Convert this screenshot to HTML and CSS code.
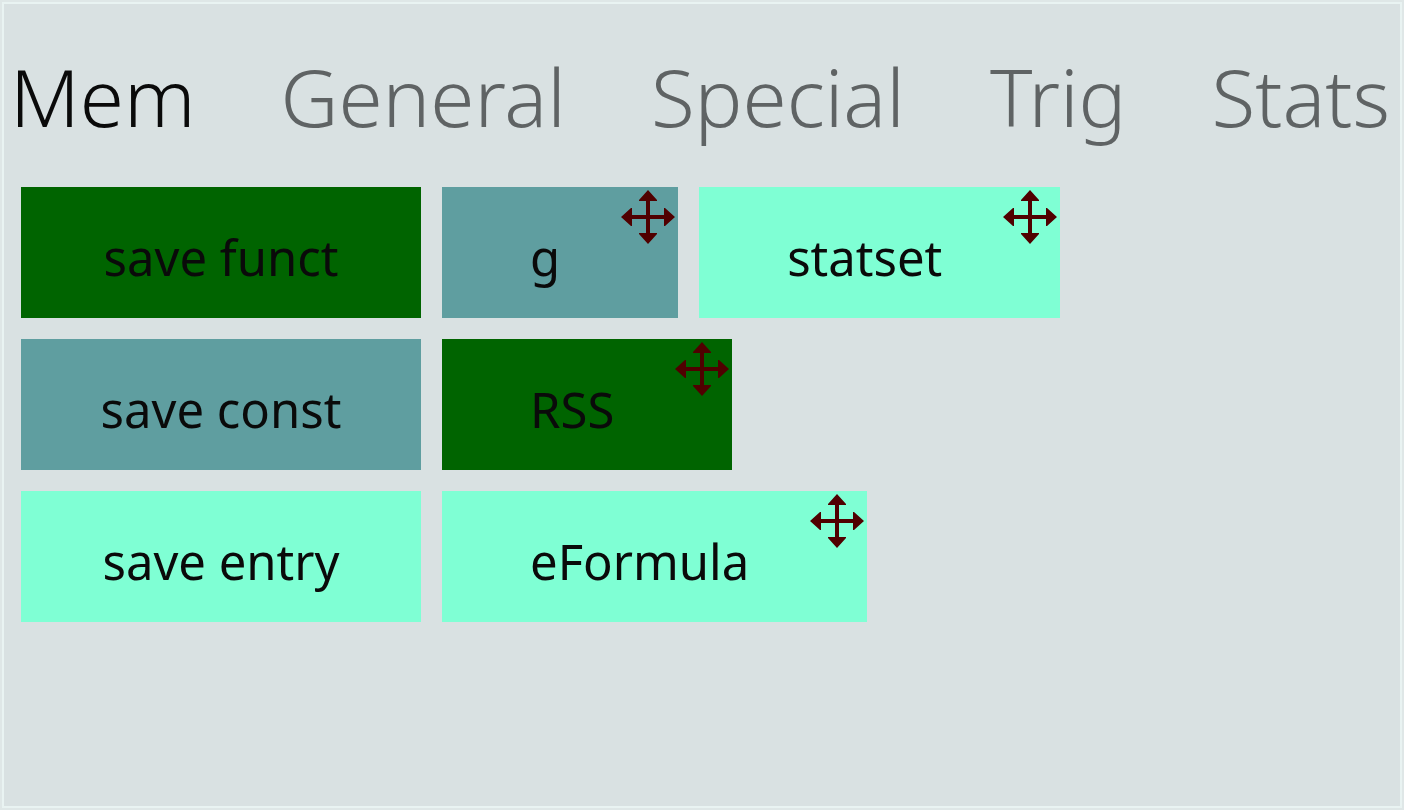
FILE: index.html
```html
<!DOCTYPE html>
<html lang="en">
<head>
  <meta charset="UTF-8">
  <meta name="viewport" content="width=device-width, initial-scale=1.0">
  <title>Calculator memory</title>
  <link rel="stylesheet" href="styles.css">
</head>
<body>
  <svg class="defs" aria-hidden="true">
    <symbol id="move" viewBox="0 0 54 54">
      <path d="M27 6v42M6 27h42" stroke="#500000" stroke-width="4"/>
      <path d="M27 0l9 10v1H18v-1zM27 54l9-10v-1H18v1zM0 27l10-9h1v18h-1zM54 27l-10-9h-1v18h1z" fill="#500000"/>
    </symbol>
  </svg>

  <nav class="tabs">
    <a class="tab active" href="#mem">Mem</a>
    <a class="tab" href="#general">General</a>
    <a class="tab" href="#special">Special</a>
    <a class="tab" href="#trig">Trig</a>
    <a class="tab" href="#stats">Stats</a>
  </nav>

  <main class="memory" id="mem">
    <div class="row">
      <button class="key save funct">save funct</button>
      <button class="key const">g<svg class="move"><use href="#move"/></svg></button>
      <button class="key entry">statset<svg class="move"><use href="#move"/></svg></button>
    </div>
    <div class="row">
      <button class="key save const">save const</button>
      <button class="key funct">RSS<svg class="move"><use href="#move"/></svg></button>
    </div>
    <div class="row">
      <button class="key save entry">save entry</button>
      <button class="key entry">eFormula<svg class="move"><use href="#move"/></svg></button>
    </div>
  </main>
</body>
</html>
```
FILE: styles.css
```css
* {
  box-sizing: border-box;
}

body {
  margin: 0;
  min-height: 100vh;
  background: #d9e1e2;
  border: 2px solid #dfe7e7;
  box-shadow: inset 0 0 0 2px #e9f3f2;
  font-family: "Noto Sans", "Open Sans", sans-serif;
  color: #0a0a0a;
}

.defs {
  display: none;
}

.tabs {
  display: flex;
  justify-content: space-between;
  padding: 40px 12px 0 8px;
}

.tab {
  font-size: 80px;
  line-height: 108px;
  font-weight: 300;
  color: #5f6364;
  text-decoration: none;
}

.tab.active {
  color: #0a0a0a;
}

.memory {
  display: flex;
  flex-direction: column;
  gap: 21px;
  padding: 37px 19px;
}

.row {
  display: flex;
  gap: 21px;
}

.key {
  position: relative;
  height: 131px;
  padding: 8px 118px 0 88px;
  border: none;
  font-family: inherit;
  font-size: 49px;
  color: #0a0a0a;
  cursor: pointer;
}

.save {
  width: 400px;
  padding: 8px 0 0;
}

.funct {
  background: #006400;
}

.const {
  background: #5f9ea0;
}

.entry {
  background: #7fffd4;
}

/* drag handle in the corner of a saved key */
.move {
  position: absolute;
  top: 3px;
  right: 3px;
  width: 54px;
  height: 54px;
}
```
